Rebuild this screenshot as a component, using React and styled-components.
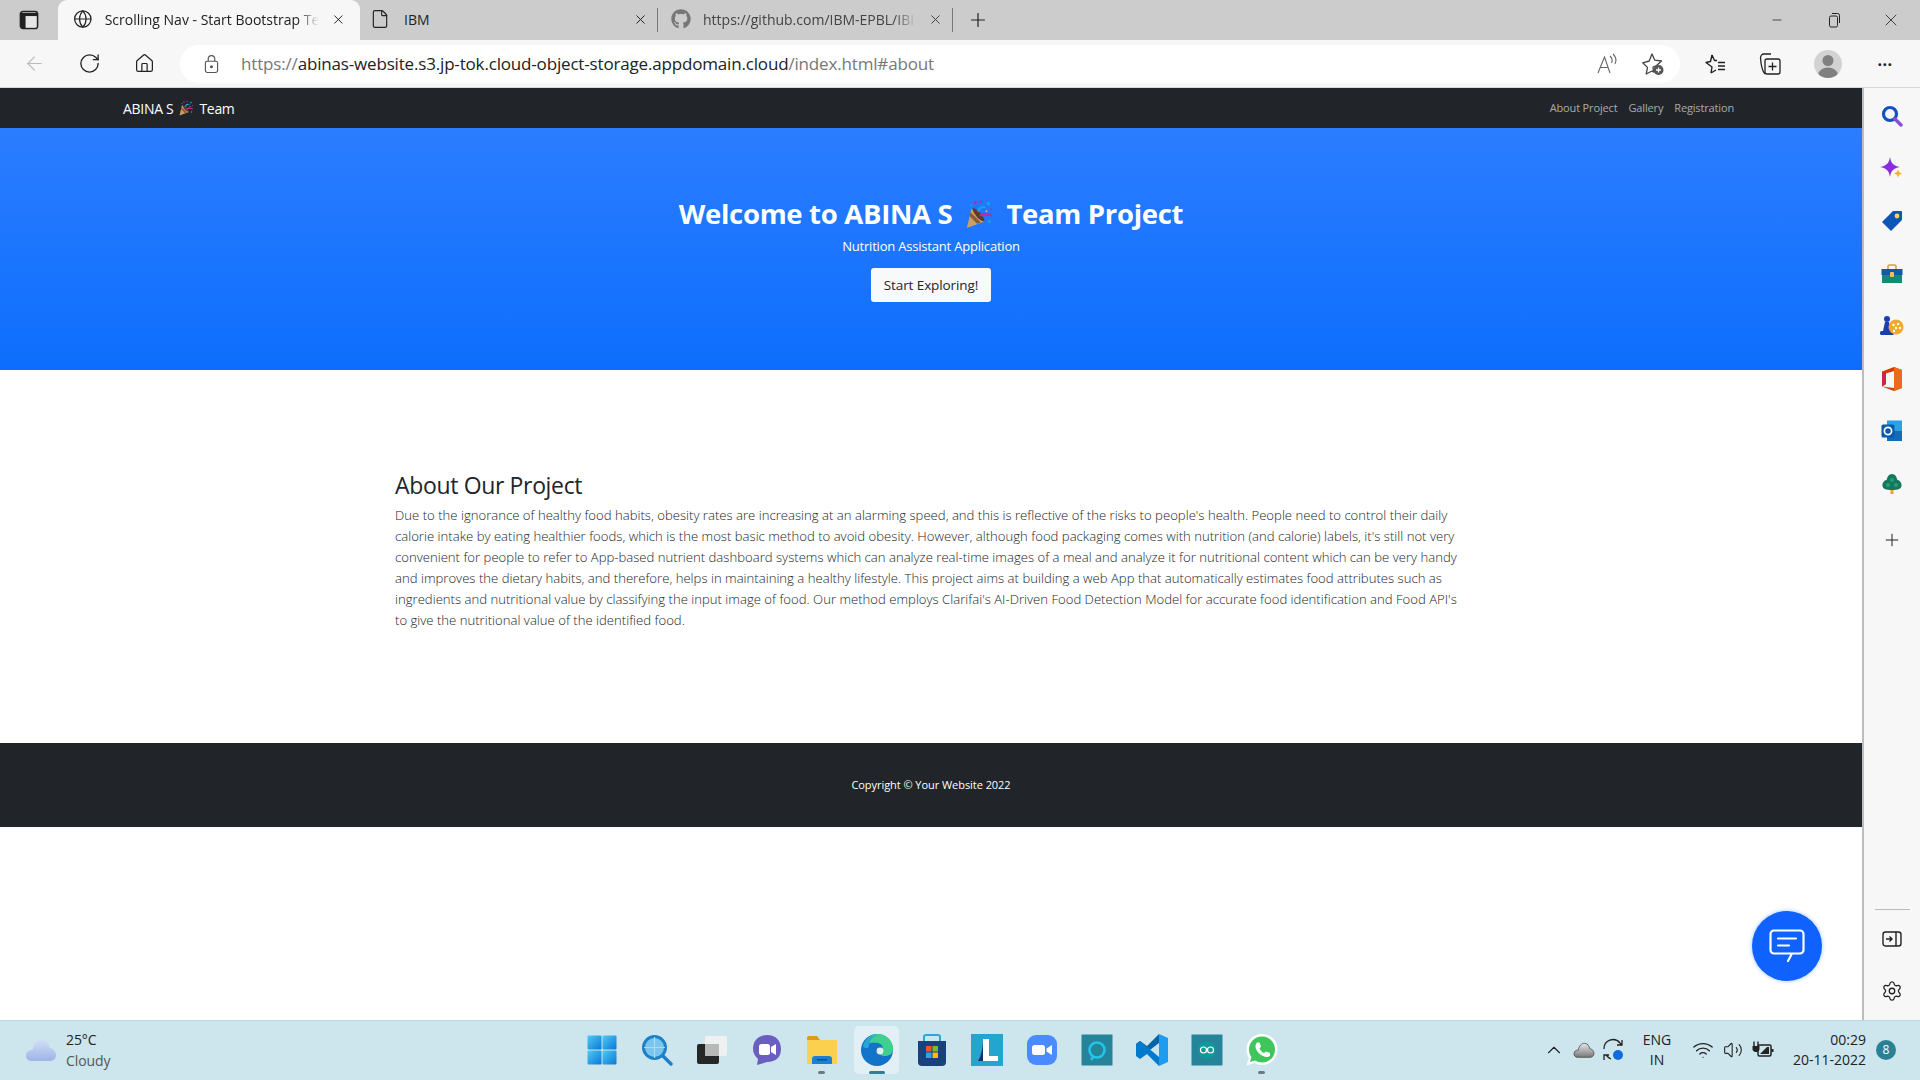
import React from "react";
import styled, { createGlobalStyle } from "styled-components";
import {
  Globe,
  X,
  Plus,
  Minus,
  RotateCw,
  Home,
  ArrowLeft,
  File,
  Settings,
  Wifi,
  ChevronUp,
  Volume2,
} from "lucide-react";
import { FaGithub } from "react-icons/fa";

const GlobalStyle = createGlobalStyle`
  html, body {
    margin: 0;
    padding: 0;
    background: #fff;
    overflow: hidden;
  }
  * {
    box-sizing: border-box;
  }
`;

const sans = `"Open Sans", "Noto Sans", "Liberation Sans", sans-serif`;

const Screen = styled.div`
  width: 1920px;
  height: 1080px;
  display: flex;
  flex-direction: column;
  font-family: ${sans};
  overflow: hidden;
`;

/* browser chrome */
const TabStrip = styled.div`
  height: 40px;
  background: #cccccc;
  display: flex;
  align-items: stretch;
  color: #222;
`;

const StripSlot = styled.div`
  width: ${(p) => p.$w}px;
  display: flex;
  align-items: center;
  justify-content: center;
  flex: none;
`;

const Tab = styled.div`
  width: ${(p) => p.$w}px;
  flex: none;
  display: flex;
  align-items: center;
  padding: 0 ${(p) => p.$right}px 2px ${(p) => p.$left}px;
  gap: ${(p) => p.$gap}px;
  font-size: 14px;
  background: ${(p) => (p.$active ? "#f7f7f7" : "transparent")};
  border-radius: 9px 9px 0 0;
  color: ${(p) => (p.$dim ? "#444" : "#222")};
`;

const TabTitle = styled.span`
  flex: 1;
  white-space: nowrap;
  -webkit-mask-image: ${(p) => (p.$fade ? "linear-gradient(90deg, #000 90%, transparent)" : "none")};
  mask-image: ${(p) => (p.$fade ? "linear-gradient(90deg, #000 90%, transparent)" : "none")};
`;

const TabDivider = styled.div`
  width: 1px;
  height: 24px;
  align-self: center;
  background: #777;
  flex: none;
`;

const Spacer = styled.div`
  flex: 1;
`;

const Toolbar = styled.div`
  height: 48px;
  background: #f7f7f7;
  display: flex;
  align-items: center;
  padding-left: 7px;
  color: #222;
  border-bottom: 1px solid #d8d8d8;
`;

const ToolSlot = styled.div`
  width: ${(p) => p.$w || 55}px;
  flex: none;
  display: flex;
  align-items: center;
  justify-content: center;
  color: ${(p) => p.$color || "#222"};
`;

const AddressBar = styled.div`
  width: 1500px;
  height: 38px;
  margin: 0 6px 0 8px;
  flex: none;
  background: #fff;
  border-radius: 19px;
  display: flex;
  align-items: center;
  padding: 0 15px 0 24px;
  font-size: 17px;
  letter-spacing: -0.17px;
`;

const Url = styled.div`
  flex: 1;
  margin-left: 22px;
  color: #777;
  white-space: nowrap;
`;

const UrlHost = styled.span`
  color: #222;
`;

const AddressIcons = styled.div`
  display: flex;
  align-items: center;
  gap: 21px;
  color: #555;
`;

const Avatar = styled.div`
  width: 28px;
  height: 28px;
  border-radius: 50%;
  background: #d2d2d2;
  overflow: hidden;
  display: flex;
`;

const Dots = styled.div`
  font-size: 16px;
  font-weight: 700;
  letter-spacing: 0.5px;
  line-height: 1;
  margin-top: -8px;
  color: #222;
`;

/* page */
const Body = styled.div`
  flex: 1;
  min-height: 0;
  display: flex;
`;

const Page = styled.main`
  flex: 1;
  min-width: 0;
  position: relative;
  background: #fff;
`;

const Nav = styled.nav`
  height: 40px;
  background: #212529;
  display: flex;
  align-items: center;
  justify-content: space-between;
  padding: 0 128px 0 123px;
`;

const Brand = styled.div`
  display: flex;
  align-items: center;
  gap: 5px;
  color: #fff;
  font-size: 14px;
  letter-spacing: -0.3px;
`;

const NavLinks = styled.div`
  display: flex;
  gap: 11px;
  padding-bottom: 1px;
`;

const NavLink = styled.a`
  color: rgba(255, 255, 255, 0.62);
  font-size: 11px;
  letter-spacing: -0.15px;
`;

const Hero = styled.header`
  height: 242px;
  background: linear-gradient(180deg, #2b7dff 0%, #0d6efd 100%);
  display: flex;
  flex-direction: column;
  align-items: center;
  padding-top: 68px;
  color: #fff;
`;

const HeroTitle = styled.h1`
  margin: 0;
  display: flex;
  align-items: center;
  gap: 12px;
  font-size: 27.5px;
  line-height: 36px;
  font-weight: 700;
  letter-spacing: -0.3px;
`;

const HeroText = styled.p`
  margin: 4px 0 0;
  font-size: 13px;
  line-height: 20px;
  font-weight: 400;
  letter-spacing: -0.2px;
`;

const HeroButton = styled.a`
  margin-top: 12px;
  width: 120px;
  height: 34px;
  border-radius: 3px;
  background: #f8f9fa;
  color: #212529;
  display: flex;
  align-items: center;
  justify-content: center;
  font-size: 13.5px;
  letter-spacing: -0.1px;
`;

const About = styled.section`
  height: 373px;
  padding: 98px 0 0 395px;
`;

const AboutTitle = styled.h2`
  margin: 0;
  font-size: 23px;
  line-height: 34px;
  font-weight: 500;
  color: #212529;
  letter-spacing: -0.35px;
`;

const AboutText = styled.p`
  margin: 3px 0 0;
  width: 1072px;
  font-size: 13.12px;
  line-height: 21px;
  font-weight: 300;
  color: #212529;
  letter-spacing: 0.01px;
`;

const Footer = styled.footer`
  height: 84px;
  padding-bottom: 2px;
  background: #212529;
  color: #fff;
  display: flex;
  align-items: center;
  justify-content: center;
  font-size: 11px;
  letter-spacing: -0.05px;
`;

const ChatButton = styled.button`
  position: absolute;
  left: 1752px;
  top: 823px;
  width: 70px;
  height: 70px;
  padding: 0;
  border: 0;
  border-radius: 50%;
  background: #0f62fe;
  box-shadow: 0 0 4px rgba(15, 98, 254, 0.4);
  display: flex;
  align-items: center;
  justify-content: center;
`;

/* edge sidebar */
const Sidebar = styled.aside`
  width: 58px;
  flex: none;
  background: #f7f7f7;
  border-left: 2px solid #bdbdbd;
  display: flex;
  flex-direction: column;
  align-items: center;
  padding: 2px 0 3px;
`;

const SideItem = styled.div`
  height: ${(p) => p.$h || 52.5}px;
  flex: none;
  display: flex;
  align-items: center;
  justify-content: center;
  color: #222;
`;

const SideRule = styled.div`
  width: 35px;
  height: 1px;
  background: #bbb;
  margin-bottom: 3px;
`;

/* taskbar */
const Taskbar = styled.div`
  height: 60px;
  padding-bottom: 2px;
  background: #cde5ed;
  border-top: 1px solid #bed6de;
  display: flex;
  align-items: center;
`;

const Weather = styled.div`
  width: 574px;
  flex: none;
  padding-left: 25px;
  display: flex;
  align-items: center;
  gap: 9px;
`;

const WeatherText = styled.div`
  font-size: 14px;
  line-height: 21px;
  color: #222;
  letter-spacing: -0.1px;
`;

const WeatherSub = styled.div`
  color: #555;
`;

const Dock = styled.div`
  display: flex;
  align-items: center;
`;

const DockItem = styled.div`
  position: relative;
  width: ${(p) => (p.$active ? 45 : 55)}px;
  margin: ${(p) => (p.$active ? "0 5px" : "0")};
  height: 48px;
  display: flex;
  align-items: center;
  justify-content: center;
  border-radius: 5px;
  background: ${(p) => (p.$active ? "#e2f0f5" : "transparent")};
  &::after {
    content: "";
    display: ${(p) => (p.$dot || p.$active ? "block" : "none")};
    position: absolute;
    bottom: 0;
    left: 50%;
    width: ${(p) => (p.$active ? 16 : 7)}px;
    height: 3px;
    margin-left: ${(p) => (p.$active ? -8 : -3.5)}px;
    border-radius: 2px;
    background: ${(p) => (p.$active ? "#2b8194" : "#6c7a80")};
  }
`;

const Tray = styled.div`
  margin-left: auto;
  padding-right: 24px;
  display: flex;
  align-items: center;
  color: #222;
`;

const TraySlot = styled.div`
  width: ${(p) => p.$w}px;
  flex: none;
  display: flex;
  align-items: center;
  justify-content: center;
`;

const Lang = styled.div`
  width: 46px;
  margin-left: 5px;
  font-size: 14px;
  line-height: 20px;
  text-align: center;
  color: #222;
`;

const Clock = styled.div`
  width: 80px;
  font-size: 14px;
  line-height: 20px;
  text-align: right;
  white-space: nowrap;
  color: #222;
`;

const Badge = styled.div`
  width: 20px;
  height: 20px;
  border-radius: 50%;
  margin-left: 10px;
  background: #2b8194;
  color: #fff;
  font-size: 12px;
  display: flex;
  align-items: center;
  justify-content: center;
`;

const Popper = ({ size }) => (
  <svg width={size} height={size} viewBox="0 0 32 32">
    <path d="M8 10 L22 24 L3 31 Z" fill="#c9a063" />
    <path d="M7 14 L18 25 L14 26.5 L5.8 18 Z" fill="#8a5a3c" />
    <path d="M9 10 C13 9 21 17 22 24 C17 24 10 16 9 10Z" fill="#5c3a2a" />
    <path d="M14 13 C15 8 19 7 23 8 L23 10 C20 9 17 10 16 14Z" fill="#19a5e6" />
    <path d="M16 17 C20 14 25 14 30 17 L29 19 C25 17 21 17 18 19Z" fill="#c2279b" />
    <circle cx="12" cy="4" r="1.6" fill="#c2279b" />
    <circle cx="8" cy="7" r="1.1" fill="#19a5e6" />
    <circle cx="18" cy="3" r="1.3" fill="#c2279b" />
    <circle cx="26" cy="5" r="1.7" fill="#19a5e6" />
    <circle cx="29" cy="11" r="1.2" fill="#c2279b" />
    <circle cx="27" cy="24" r="1.5" fill="#19a5e6" />
    <circle cx="24" cy="13" r="1" fill="#e9b949" />
  </svg>
);

const ChatIcon = () => (
  <svg width="36" height="34" viewBox="0 0 36 34" fill="none" stroke="#fff" strokeWidth="2.2" strokeLinecap="round" strokeLinejoin="round">
    <path d="M5 1.5 H31 A3.5 3.5 0 0 1 34.5 5 V21 A3.5 3.5 0 0 1 31 24.5 H23 L19 32 M23 24.5 H5 A3.5 3.5 0 0 1 1.5 21 V5 A3.5 3.5 0 0 1 5 1.5" />
    <path d="M9 9.5 H27 M9 16.5 H20" />
  </svg>
);

const Lock = () => (
  <svg width="15" height="20" viewBox="0 0 16 20" fill="none" stroke="#555" strokeWidth="1.2">
    <rect x="1.5" y="7" width="13" height="12" rx="2" />
    <path d="M4.5 7 V4.5 A3.5 3.5 0 0 1 11.5 4.5 V7" />
    <circle cx="8" cy="13" r="1" fill="#555" />
  </svg>
);

const PanelToggle = () => (
  <svg width="20" height="18" viewBox="0 0 20 18" fill="none" stroke="#222" strokeWidth="1.4">
    <rect x="1" y="2" width="18" height="14" rx="2.5" />
    <path d="M14 2 V16" />
    <path d="M4 9 H10 M7.5 6.5 L10 9 L7.5 11.5" />
  </svg>
);

const SidebarToggle = () => (
  <svg width="20" height="20" viewBox="0 0 20 20" fill="none" stroke="#222" strokeWidth="1.7">
    <rect x="1.5" y="1.5" width="17" height="17" rx="2.5" />
    <path d="M1.5 4.5 H18.5" strokeWidth="3" />
    <rect x="2" y="3" width="4.5" height="15" fill="#222" stroke="none" />
    <rect x="7" y="6.5" width="10.5" height="11" fill="#e6e6e6" stroke="none" />
  </svg>
);

const Restore = () => (
  <svg width="14" height="16" viewBox="0 0 14 16" fill="none" stroke="#222" strokeWidth="1">
    <rect x="2.5" y="4" width="8" height="11" rx="1.5" />
    <path d="M5 1.5 H10.5 A2 2 0 0 1 12.5 3.5 V11" />
  </svg>
);

const ReadAloud = () => (
  <svg width="24" height="22" viewBox="0 0 24 22" fill="none" stroke="#666" strokeWidth="1.1">
    <path d="M2 20 L8.5 4 L14 20 M4.5 14.5 H12.5" />
    <path d="M14 3 C16 5 16.5 8 15.5 10 M17 1 C20 4 20.5 8 19 11" />
  </svg>
);

const StarAdd = () => (
  <svg width="24" height="24" viewBox="0 0 24 24" fill="none" stroke="#444" strokeWidth="1.3">
    <path d="M11 2 L13.8 8.2 L20.5 9 L15.6 13.5 L12 15 L12.5 20 L11 19 L5.2 22 L6.5 15.4 L1.7 10.8 L8.2 9 Z" strokeLinejoin="round" />
    <circle cx="17.5" cy="18" r="5" fill="#555" stroke="none" />
    <path d="M17.5 15.5 V20.5 M15 18 H20" stroke="#fff" />
  </svg>
);

const Favorites = () => (
  <svg width="24" height="24" viewBox="0 0 24 24" fill="none" stroke="#222" strokeWidth="1.4" strokeLinejoin="round">
    <path d="M9 3 L11.5 8.5 H14 M8 21 L9 15 L3 10.5 L7.5 9.5 L9 3 M8 21 L13 18" />
    <path d="M15 10.5 H22 M15 14 H22 M15 17.5 H22" />
  </svg>
);

const Collections = () => (
  <svg width="24" height="24" viewBox="0 0 24 24" fill="none" stroke="#222" strokeWidth="1.3">
    <path d="M7 22 C5 20 3 13 2.5 6 C2.5 3.5 4 2 6 2 H13" />
    <rect x="7" y="7" width="15" height="15" rx="2" />
    <path d="M14.5 10.5 V18.5 M10.5 14.5 H18.5" />
  </svg>
);

const Person = () => (
  <svg width="28" height="28" viewBox="0 0 28 28" fill="#808080">
    <circle cx="14" cy="10.5" r="5.5" />
    <ellipse cx="14" cy="24" rx="9.5" ry="6.5" />
  </svg>
);

const Cloud = ({ w = 32, h = 24, top = "#d2ddf6", bottom = "#9db4e8", stroke = "none" }) => (
  <svg width={w} height={h} viewBox="0 0 32 24">
    <defs>
      <linearGradient id={`cloud${w}`} x1="0" y1="0" x2="0" y2="1">
        <stop offset="0" stopColor={top} />
        <stop offset="1" stopColor={bottom} />
      </linearGradient>
    </defs>
    <path
      d="M7 23 C3 23 1 20.5 1 17.5 C1 14 4 12 7.5 12 C8.5 6 12 2 16.5 2 C21 2 24 5.5 24.5 10 C28 10.5 31 13.5 31 17 C31 20.5 28.5 23 25 23 Z"
      fill={`url(#cloud${w})`}
      stroke={stroke}
    />
  </svg>
);

// sidebar drawings
const SideSearch = () => (
  <svg width="22" height="22" viewBox="0 0 22 22" fill="none">
    <circle cx="9" cy="9" r="6.5" stroke="#1550c0" strokeWidth="3.2" />
    <path d="M14 14 L20 20" stroke="#8a4bd8" strokeWidth="3.4" strokeLinecap="round" />
  </svg>
);
const SideSpark = () => (
  <svg width="24" height="24" viewBox="0 0 24 24">
    <path d="M10 0 C11 6 13 8.5 20 10 C13 11.5 11 14 10 20 C9 14 7 11.5 0 10 C7 8.5 9 6 10 0Z" fill="#8a2be2" />
    <path d="M18 12 C18.5 15 19.5 16 22.5 16.5 C19.5 17 18.5 18 18 21 C17.5 18 16.5 17 13.5 16.5 C16.5 16 17.5 15 18 12Z" fill="#f2b21e" />
  </svg>
);
const SideTag = () => (
  <svg width="22" height="22" viewBox="0 0 22 22">
    <path d="M12 1 H20 A1 1 0 0 1 21 2 V10 L10 21 L1 12 Z" fill="#0d56b8" />
    <circle cx="16" cy="6" r="2.4" fill="#f6d365" />
  </svg>
);
const SideCase = () => (
  <svg width="22" height="20" viewBox="0 0 22 20">
    <path d="M7 5 V2.5 A1.5 1.5 0 0 1 8.5 1 H13.5 A1.5 1.5 0 0 1 15 2.5 V5" stroke="#d9a03a" strokeWidth="1.6" fill="none" />
    <rect x="0.5" y="5" width="21" height="6" fill="#115aa8" />
    <rect x="1" y="11" width="20" height="8" fill="#148a70" />
    <rect x="9" y="8" width="4" height="5" rx="1" fill="#f2c14e" />
  </svg>
);
const SideGames = () => (
  <svg width="24" height="22" viewBox="0 0 24 22">
    <circle cx="7" cy="4" r="3" fill="#1a3fb0" />
    <path d="M5 7 H9 L11 16 H3 Z" fill="#1a3fb0" />
    <rect x="0" y="16" width="14" height="4" rx="1.5" fill="#1a3fb0" />
    <circle cx="16" cy="12" r="7.5" fill="#f0a92b" />
    <circle cx="13.5" cy="10" r="1.2" fill="#fff" />
    <circle cx="18" cy="9" r="1.2" fill="#fff" />
    <circle cx="16" cy="13" r="1.2" fill="#fff" />
    <circle cx="20" cy="13" r="1.2" fill="#fff" />
    <circle cx="14" cy="16" r="1.2" fill="#fff" />
  </svg>
);
const SideOffice = () => (
  <svg width="20" height="24" viewBox="0 0 20 24">
    <path d="M12 0 L20 3 V21 L12 24 L0 19.5 L12 21 V4 L4 6.5 V17 L0 19.5 V4.5 Z" fill="#d83b01" />
    <path d="M0 4.5 L4 6.5 V17 L0 19.5 Z" fill="#c8264a" />
    <path d="M12 0 L20 3 V21 L12 24 Z" fill="#ea6a1f" />
  </svg>
);
const SideOutlook = () => (
  <svg width="22" height="22" viewBox="0 0 22 22">
    <rect x="6" y="0.5" width="15" height="20" fill="#2aa0e6" />
    <path d="M6 11 H21 V21 H6 Z" fill="#0f6cbd" />
    <rect x="0.5" y="4.5" width="13" height="13" rx="1.5" fill="#0a5aa8" />
    <circle cx="7" cy="11" r="3.6" fill="none" stroke="#fff" strokeWidth="1.7" />
  </svg>
);
const SideTree = () => (
  <svg width="20" height="22" viewBox="0 0 20 22">
    <rect x="8.5" y="15" width="3" height="6" fill="#e0a92e" />
    <path d="M10 1 C13 1 15 4 15 6.5 C18 7.5 20 10 19.5 13 C19 16 16 17 10 17 C4 17 1 16 0.5 13 C0 10 2 7.5 5 6.5 C5 4 7 1 10 1Z" fill="#127a5c" />
    <circle cx="10" cy="7" r="2" fill="#2c9a78" />
    <circle cx="6" cy="12" r="2" fill="#2c9a78" />
    <circle cx="14" cy="12" r="2" fill="#2c9a78" />
  </svg>
);

// taskbar drawings
const WinStart = () => (
  <svg width="30" height="30" viewBox="0 0 30 30">
    <defs>
      <linearGradient id="startA" x1="0" y1="0" x2="1" y2="1">
        <stop offset="0" stopColor="#52c8f4" />
        <stop offset="1" stopColor="#0a78d4" />
      </linearGradient>
    </defs>
    <rect x="0.5" y="0.5" width="14" height="14" rx="1" fill="url(#startA)" />
    <rect x="15.5" y="0.5" width="14" height="14" rx="1" fill="url(#startA)" />
    <rect x="0.5" y="15.5" width="14" height="14" rx="1" fill="url(#startA)" />
    <rect x="15.5" y="15.5" width="14" height="14" rx="1" fill="url(#startA)" />
  </svg>
);
const DockSearch = () => (
  <svg width="32" height="32" viewBox="0 0 32 32">
    <circle cx="13.5" cy="13.5" r="11" fill="#7cc4ec" stroke="#1d80c4" strokeWidth="3" />
    <path d="M13.5 3 V24 M3 13.5 H24" stroke="#a9dcf5" strokeWidth="1.2" />
    <path d="M22 22 L30 30" stroke="#1d80c4" strokeWidth="3.4" strokeLinecap="round" />
  </svg>
);
const TaskView = () => (
  <svg width="32" height="32" viewBox="0 0 32 32">
    <rect x="1" y="10" width="22" height="20" rx="2" fill="#262626" />
    <rect x="9" y="2" width="22" height="20" rx="2" fill="#f0f0f0" opacity="0.95" />
    <rect x="9" y="10" width="14" height="12" fill="#b8b8b8" />
  </svg>
);
const Teams = () => (
  <svg width="30" height="32" viewBox="0 0 30 32">
    <path d="M15 1 C24 1 29 7 29 15 C29 23 24 28 15 28 L5 31 L6 25 C3 22 1 19 1 15 C1 7 6 1 15 1Z" fill="#6a5fc1" />
    <rect x="7" y="10" width="11" height="11" rx="2.5" fill="#fff" />
    <path d="M19 13 L24 10 V21 L19 18Z" fill="#fff" />
  </svg>
);
const Folder = () => (
  <svg width="32" height="30" viewBox="0 0 32 30">
    <path d="M1 3 A2 2 0 0 1 3 1 H11 L14 5 H1 Z" fill="#d99f10" />
    <rect x="1" y="5" width="30" height="24" fill="#fcd04f" />
    <path d="M6 29 V24 A3 3 0 0 1 9 21 H23 A3 3 0 0 1 26 24 V29 Z" fill="#1a80d4" />
    <rect x="11" y="24" width="10" height="1.4" fill="#0c4c8a" />
  </svg>
);
const Edge = () => (
  <svg width="34" height="34" viewBox="0 0 34 34">
    <circle cx="17" cy="17" r="16" fill="#1273c9" />
    <path d="M3 13 C6 4 13 1 18 1 C27 1 33 8 33 16 C33 21 29 23 25 23 C21 23 19 21 19 19 C24 18 24 11 18 10 C11 9 5 11 3 13Z" fill="#3fcf8e" />
    <path d="M3 13 C5 7 11 2 18 2 C12 4 9 8 9 13 C9 16 4 16 3 13Z" fill="#29a6d9" />
    <circle cx="20" cy="18" r="3.4" fill="#e2f0f5" />
  </svg>
);
const Store = () => (
  <svg width="32" height="34" viewBox="0 0 32 34">
    <path d="M8 8 V4 A2 2 0 0 1 10 2 H22 A2 2 0 0 1 24 4 V8" fill="none" stroke="#2aa6d8" strokeWidth="2" />
    <path d="M2 8 H30 V29 A4 4 0 0 1 26 33 H6 A4 4 0 0 1 2 29 Z" fill="#17427d" />
    <rect x="10" y="13" width="5.5" height="5.5" fill="#f0542b" />
    <rect x="16.5" y="13" width="5.5" height="5.5" fill="#7fba20" />
    <rect x="10" y="19.5" width="5.5" height="5.5" fill="#2aa6e8" />
    <rect x="16.5" y="19.5" width="5.5" height="5.5" fill="#fbbc09" />
  </svg>
);
const LApp = () => (
  <svg width="34" height="34" viewBox="0 0 34 34">
    <rect x="1" y="1" width="32" height="32" fill="#23a5d0" />
    <path d="M8 28 C12 22 13 12 13 6 H13 V28 Z" fill="#10306e" />
    <path d="M13 6 H19 V23 H28 V28 H13 Z" fill="#fff" />
  </svg>
);
const Zoom = () => (
  <svg width="32" height="32" viewBox="0 0 32 32">
    <rect x="1" y="1" width="30" height="30" rx="9" fill="#4a8cff" />
    <rect x="6" y="11" width="13" height="10" rx="2.5" fill="#fff" />
    <path d="M20.5 14.5 L26 11 V21 L20.5 17.5Z" fill="#fff" />
  </svg>
);
const Alexa = () => (
  <svg width="32" height="32" viewBox="0 0 32 32">
    <rect x="0.5" y="0.5" width="31" height="31" fill="#25839a" />
    <circle cx="16" cy="16" r="7.5" fill="none" stroke="#21c7ea" strokeWidth="2.6" />
    <path d="M12 23 L10 26" stroke="#21c7ea" strokeWidth="2.4" />
  </svg>
);
const VsCode = () => (
  <svg width="34" height="34" viewBox="0 0 34 34">
    <path d="M24 1 L33 5 V29 L24 33 L24 33 Z" fill="#1f9cf0" />
    <path d="M24 1 V10 L11 20 L5 25 L1 22 L9 17 L1 11 L5 8 L12 13 Z" fill="#0065a9" />
    <path d="M1 11 L5 8 L24 24 V33 L12 21 L5 26 L1 23Z" fill="#007acc" />
  </svg>
);
const Arduino = () => (
  <svg width="32" height="32" viewBox="0 0 32 32" fill="none">
    <rect x="0.5" y="0.5" width="31" height="31" fill="#25839a" />
    <circle cx="16" cy="16" r="9" fill="#0f9a9a" />
    <circle cx="12.5" cy="16" r="3" stroke="#fff" strokeWidth="1.2" />
    <circle cx="19.5" cy="16" r="3" stroke="#fff" strokeWidth="1.2" />
  </svg>
);
const Whatsapp = () => (
  <svg width="34" height="34" viewBox="0 0 34 34">
    <path d="M17 1 C26 1 32.5 8 32.5 16.5 C32.5 25 26 32 17 32 C14 32 11.5 31 9.5 30 L1.5 32.5 L4 25 C2.5 22.5 1.5 20 1.5 16.5 C1.5 8 8 1 17 1Z" fill="#fff" />
    <path d="M17 3.5 C24.5 3.5 30 9.5 30 16.5 C30 24 24.5 29.5 17 29.5 C14.5 29.5 12 28.7 10 27.5 L5 29 L6.5 24 C5 22 4 19.5 4 16.5 C4 9.5 9.5 3.5 17 3.5Z" fill="#3fc65b" />
    <path d="M12 9.5 L14.5 9.5 L16 13.5 L14.5 15.5 C15.5 17.5 17 19 19 20 L21 18.5 L25 20 V22.5 C23.5 24.5 21 24.5 18 23 C14.5 21.5 12.5 19 11 16 C10 13.5 10.5 11 12 9.5Z" fill="#fff" />
  </svg>
);
const Sync = () => (
  <svg width="24" height="24" viewBox="0 0 24 24" fill="none" stroke="#222" strokeWidth="1.3">
    <path d="M2 11 A9 9 0 0 1 18 5 L20 7 M20 2 V7 H15" />
    <path d="M4 17 L6 19 A7 7 0 0 0 9 21 M2 22 V17 H7" />
    <circle cx="16" cy="17" r="5" fill="#0f6cdf" stroke="none" />
  </svg>
);
const Battery = () => (
  <svg width="22" height="18" viewBox="0 0 22 18">
    <path d="M2 0.5 V5 M6 0.5 V5" stroke="#222" strokeWidth="1.4" />
    <path d="M0.5 5 H7.5 V8 A3 3 0 0 1 4 11 A3 3 0 0 1 0.5 8Z" fill="#222" />
    <rect x="6" y="4" width="13" height="11" rx="1.5" fill="none" stroke="#222" strokeWidth="1.5" />
    <path d="M8 13 L15 6 H17 V13Z" fill="#222" />
    <rect x="19.5" y="8" width="2" height="3" fill="#222" />
  </svg>
);

const sideIcons = [SideSearch, SideSpark, SideTag, SideCase, SideGames, SideOffice, SideOutlook, SideTree];
const dockIcons = [
  { Icon: WinStart },
  { Icon: DockSearch },
  { Icon: TaskView },
  { Icon: Teams },
  { Icon: Folder, dot: true },
  { Icon: Edge, active: true },
  { Icon: Store },
  { Icon: LApp },
  { Icon: Zoom },
  { Icon: Alexa },
  { Icon: VsCode },
  { Icon: Arduino },
  { Icon: Whatsapp, dot: true },
];

export default function App() {
  return (
    <Screen>
      <GlobalStyle />
      <TabStrip>
        <StripSlot $w={58}>
          <SidebarToggle />
        </StripSlot>
        <Tab $w={302} $active $left={15} $right={14} $gap={12}>
          <Globe size={20} strokeWidth={1.5} />
          <TabTitle $fade>Scrolling Nav - Start Bootstrap Te</TabTitle>
          <X size={15} strokeWidth={1.6} />
        </Tab>
        <Tab $w={297} $left={10} $right={9} $gap={14}>
          <File size={20} strokeWidth={1.4} />
          <TabTitle>IBM</TabTitle>
          <X size={15} strokeWidth={1.6} />
        </Tab>
        <TabDivider />
        <Tab $w={294} $left={13} $right={9} $gap={12} $dim>
          <FaGithub size={20} color="#777" />
          <TabTitle $fade>https://github.com/IBM-EPBL/IBI</TabTitle>
          <X size={15} strokeWidth={1.6} />
        </Tab>
        <TabDivider />
        <StripSlot $w={50}>
          <Plus size={22} strokeWidth={1.3} />
        </StripSlot>
        <Spacer />
        <StripSlot $w={57}>
          <Minus size={14} strokeWidth={1.3} />
        </StripSlot>
        <StripSlot $w={57}>
          <Restore />
        </StripSlot>
        <StripSlot $w={58}>
          <X size={20} strokeWidth={1} />
        </StripSlot>
      </TabStrip>

      <Toolbar>
        <ToolSlot $color="#bbb">
          <ArrowLeft size={23} strokeWidth={1.2} />
        </ToolSlot>
        <ToolSlot>
          <RotateCw size={23} strokeWidth={1.4} />
        </ToolSlot>
        <ToolSlot>
          <Home size={21} strokeWidth={1.4} />
        </ToolSlot>
        <AddressBar>
          <Lock />
          <Url>
            https://<UrlHost>abinas-website.s3.jp-tok.cloud-object-storage.appdomain.cloud</UrlHost>/index.html#about
          </Url>
          <AddressIcons>
            <ReadAloud />
            <StarAdd />
          </AddressIcons>
        </AddressBar>
        <ToolSlot $w={57}>
          <Favorites />
        </ToolSlot>
        <ToolSlot $w={54}>
          <Collections />
        </ToolSlot>
        <ToolSlot $w={62}>
          <Avatar>
            <Person />
          </Avatar>
        </ToolSlot>
        <ToolSlot $w={52}>
          <Dots>...</Dots>
        </ToolSlot>
      </Toolbar>

      <Body>
        <Page>
          <Nav>
            <Brand>
              ABINA S <Popper size={16} /> Team
            </Brand>
            <NavLinks>
              <NavLink>About Project</NavLink>
              <NavLink>Gallery</NavLink>
              <NavLink>Registration</NavLink>
            </NavLinks>
          </Nav>
          <Hero>
            <HeroTitle>
              Welcome to ABINA S <Popper size={30} /> Team Project
            </HeroTitle>
            <HeroText>Nutrition Assistant Application</HeroText>
            <HeroButton>Start Exploring!</HeroButton>
          </Hero>
          <About>
            <AboutTitle>About Our Project</AboutTitle>
            <AboutText>
              Due to the ignorance of healthy food habits, obesity rates are increasing at an alarming speed, and this is
              reflective of the risks to people's health. People need to control their daily calorie intake by eating
              healthier foods, which is the most basic method to avoid obesity. However, although food packaging comes with
              nutrition (and calorie) labels, it's still not very convenient for people to refer to App-based nutrient
              dashboard systems which can analyze real-time images of a meal and analyze it for nutritional content which
              can be very handy and improves the dietary habits, and therefore, helps in maintaining a healthy lifestyle.
              This project aims at building a web App that automatically estimates food attributes such as ingredients and
              nutritional value by classifying the input image of food. Our method employs Clarifai's AI-Driven Food
              Detection Model for accurate food identification and Food API's to give the nutritional value of the
              identified food.
            </AboutText>
          </About>
          <Footer>Copyright © Your Website 2022</Footer>
          <ChatButton>
            <ChatIcon />
          </ChatButton>
        </Page>
        <Sidebar>
          {sideIcons.map((Icon, i) => (
            <SideItem key={i}>
              <Icon />
            </SideItem>
          ))}
          <SideItem $h={60}>
            <Plus size={20} strokeWidth={1.2} />
          </SideItem>
          <Spacer />
          <SideRule />
          <SideItem $h={52}>
            <PanelToggle />
          </SideItem>
          <SideItem $h={52}>
            <Settings size={22} strokeWidth={1.4} />
          </SideItem>
        </Sidebar>
      </Body>

      <Taskbar>
        <Weather>
          <Cloud />
          <WeatherText>
            25°C
            <WeatherSub>Cloudy</WeatherSub>
          </WeatherText>
        </Weather>
        <Dock>
          {dockIcons.map(({ Icon, dot, active }, i) => (
            <DockItem key={i} $dot={dot} $active={active}>
              <Icon />
            </DockItem>
          ))}
        </Dock>
        <Tray>
          <TraySlot $w={30}>
            <ChevronUp size={22} strokeWidth={1.2} />
          </TraySlot>
          <TraySlot $w={30}>
            <Cloud w={22} h={16} top="#e8e8e8" bottom="#777" stroke="#333" />
          </TraySlot>
          <TraySlot $w={30}>
            <Sync />
          </TraySlot>
          <Lang>
            ENG
            <br />
            IN
          </Lang>
          <TraySlot $w={46}>
            <Wifi size={22} strokeWidth={1.4} />
          </TraySlot>
          <TraySlot $w={14}>
            <Volume2 size={20} strokeWidth={1.3} style={{ flex: "none" }} />
          </TraySlot>
          <TraySlot $w={46}>
            <Battery />
          </TraySlot>
          <Clock>
            00:29
            <br />
            20-11-2022
          </Clock>
          <Badge>8</Badge>
        </Tray>
      </Taskbar>
    </Screen>
  );
}
